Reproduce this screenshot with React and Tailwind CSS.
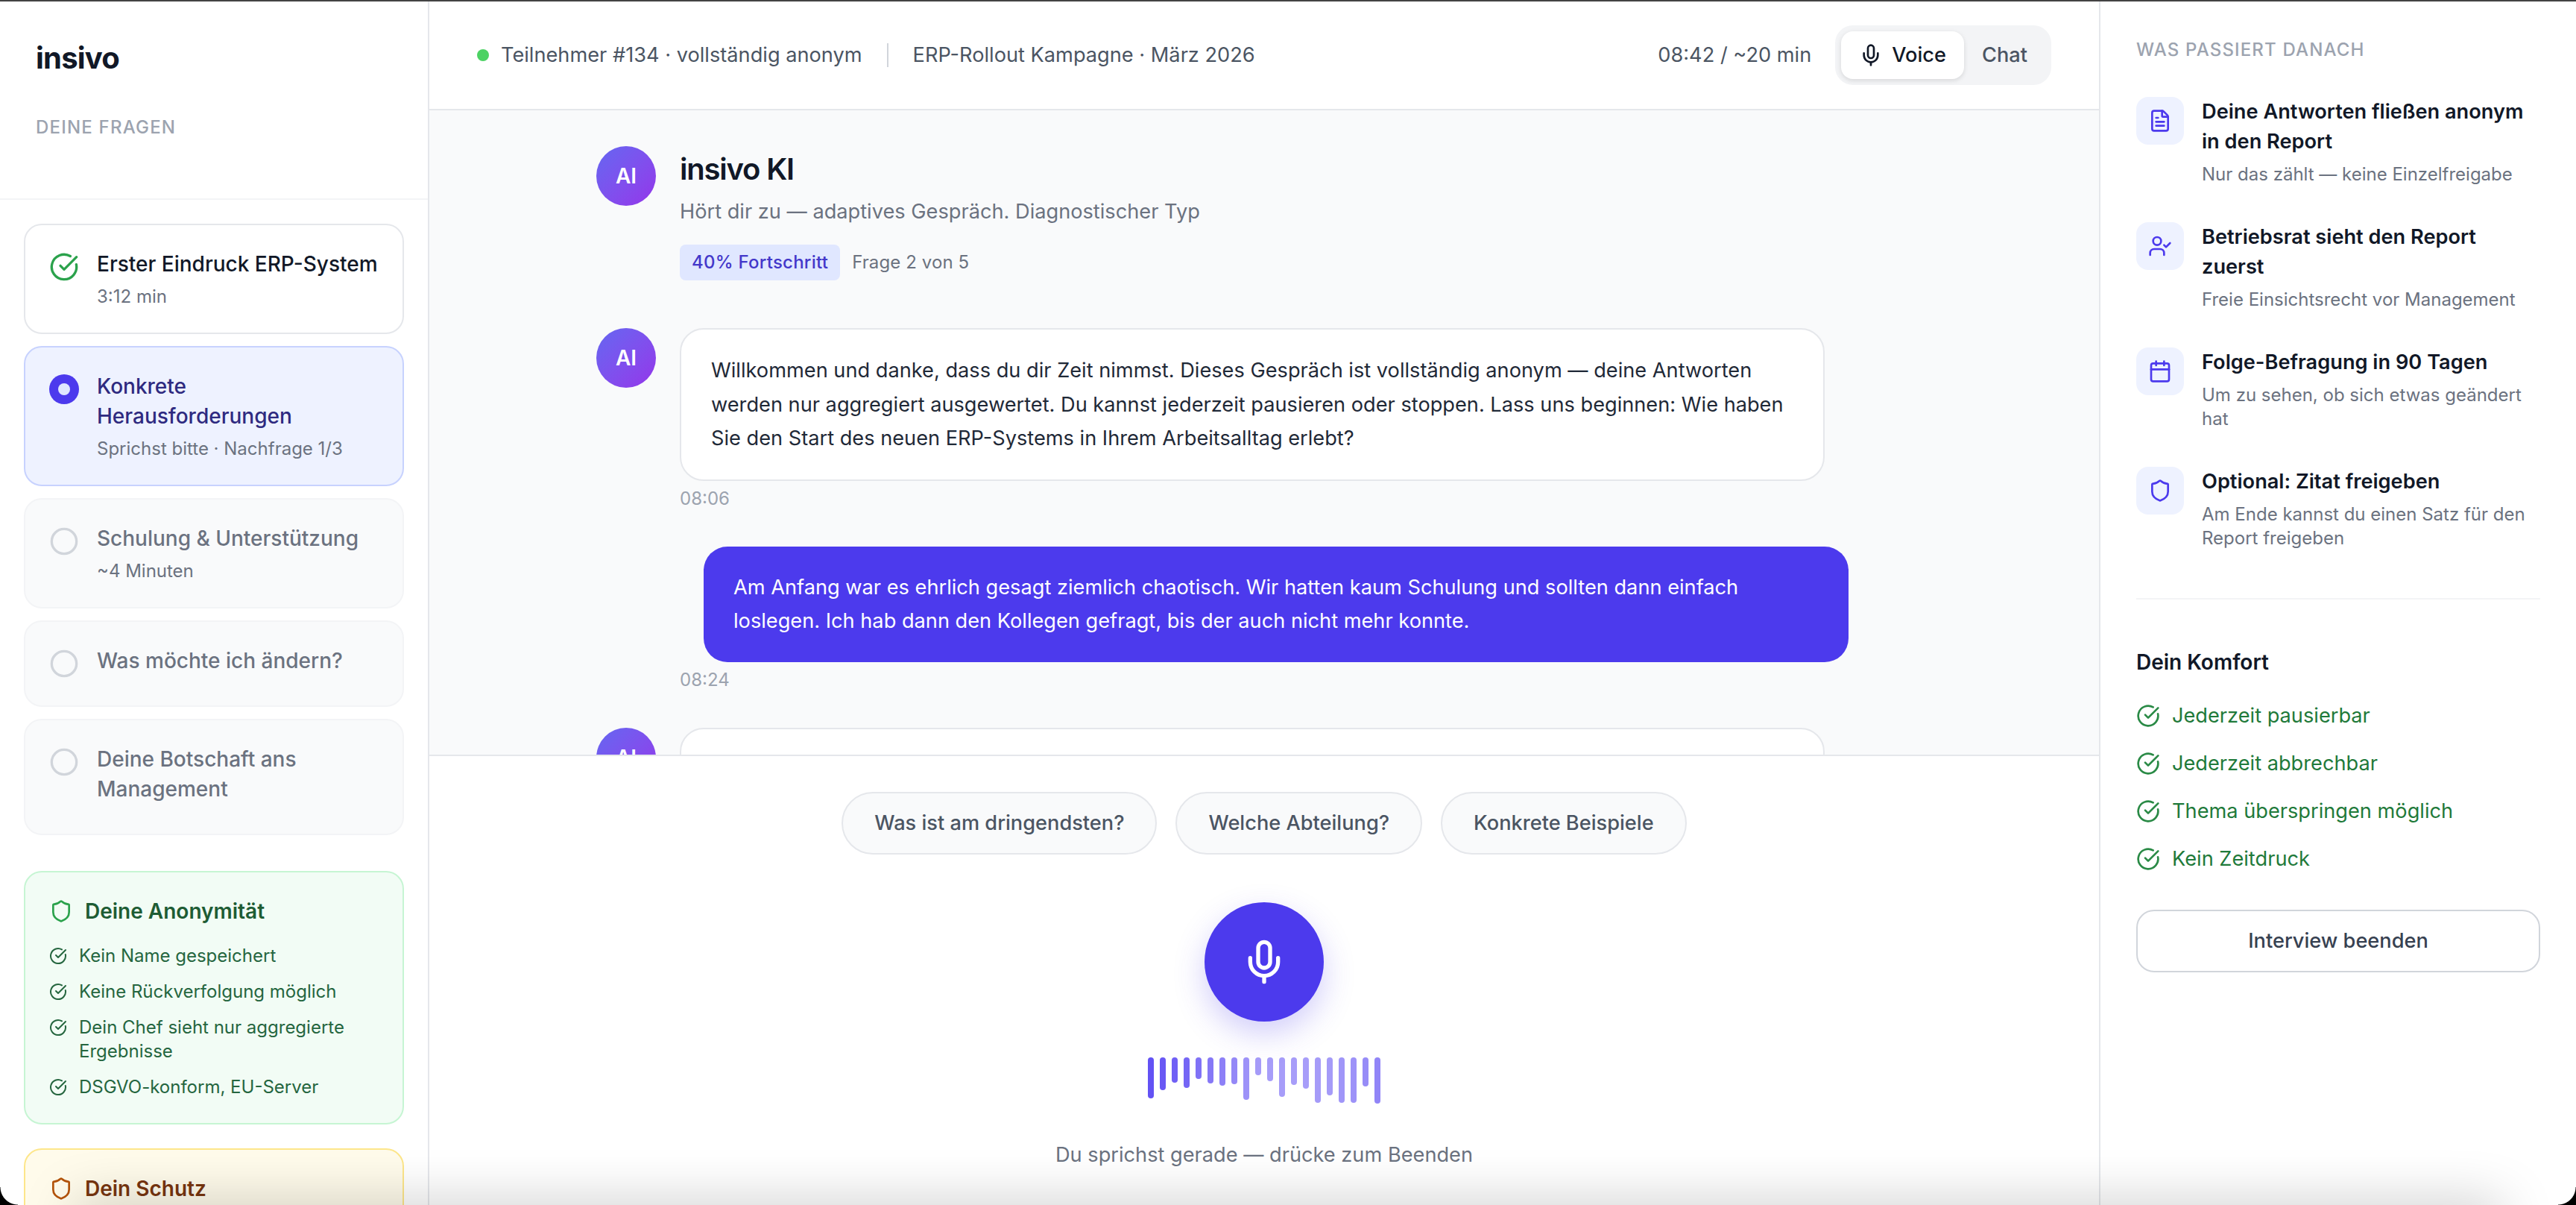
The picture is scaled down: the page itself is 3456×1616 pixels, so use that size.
import {
  Calendar,
  Circle,
  CircleCheckBig,
  FileText,
  Mic,
  Shield,
  UserCheck,
} from 'lucide-react';

const QUESTIONS = [
  { title: 'Erster Eindruck ERP-System', sub: '3:12 min', state: 'done' },
  { title: 'Konkrete Herausforderungen', sub: 'Sprichst bitte · Nachfrage 1/3', state: 'active' },
  { title: 'Schulung & Unterstützung', sub: '~4 Minuten', state: 'open' },
  { title: 'Was möchte ich ändern?', state: 'open' },
  { title: 'Deine Botschaft ans Management', state: 'open' },
];

const ANONYMITY = [
  'Kein Name gespeichert',
  'Keine Rückverfolgung möglich',
  'Dein Chef sieht nur aggregierte Ergebnisse',
  'DSGVO-konform, EU-Server',
];

const NEXT_STEPS = [
  { icon: FileText, title: 'Deine Antworten fließen anonym in den Report', sub: 'Nur das zählt — keine Einzelfreigabe' },
  { icon: UserCheck, title: 'Betriebsrat sieht den Report zuerst', sub: 'Freie Einsichtsrecht vor Management' },
  { icon: Calendar, title: 'Folge-Befragung in 90 Tagen', sub: 'Um zu sehen, ob sich etwas geändert hat' },
  { icon: Shield, title: 'Optional: Zitat freigeben', sub: 'Am Ende kannst du einen Satz für den Report freigeben' },
];

const COMFORT = ['Jederzeit pausierbar', 'Jederzeit abbrechbar', 'Thema überspringen möglich', 'Kein Zeitdruck'];

const CHIPS = ['Was ist am dringendsten?', 'Welche Abteilung?', 'Konkrete Beispiele'];

const WAVE = [
  [55, 0.87], [44, 0.84], [34, 0.8], [41, 0.77], [29, 0.71],
  [35, 0.68], [38, 0.64], [36, 0.6], [57, 0.55], [24, 0.5],
  [32, 0.49], [53, 0.49], [37, 0.49], [42, 0.49], [61, 0.5],
  [51, 0.5], [61, 0.53], [61, 0.55], [39, 0.58], [62, 0.61],
];

function Avatar() {
  return (
    <div className="flex h-[80px] w-[80px] shrink-0 items-center justify-center rounded-full bg-gradient-to-br from-[#6366f1] to-[#9333ea] text-[28px] font-semibold text-white">
      AI
    </div>
  );
}

function QuestionCard({ title, sub, state }) {
  const styles = {
    done: 'border-[#e5e7eb] bg-white text-[#111827]',
    active: 'border-[#c7d2fe] bg-[#eef2ff] text-[#2e2a80]',
    open: 'border-[#f3f4f6] bg-[#f9fafb] text-[#6b7280]',
  };
  return (
    <div className={`flex gap-[24px] rounded-[24px] border-2 p-[32px] ${styles[state]}`}>
      <div className="mt-[4px] h-[40px] w-[40px] shrink-0">
        {state === 'done' && <CircleCheckBig size={40} className="text-[#2ba24c]" />}
        {state === 'active' && (
          <div className="flex h-[40px] w-[40px] items-center justify-center rounded-full bg-[#4c3aed]">
            <div className="h-[16px] w-[16px] rounded-full bg-[#e0e7ff]" />
          </div>
        )}
        {state === 'open' && <Circle size={40} className="text-[#d1d5db]" />}
      </div>
      <div>
        <div className="mb-[8px] text-[28px] leading-[40px] font-medium">{title}</div>
        {sub && <div className="text-[24px] leading-[32px] font-normal text-[#6b7280]">{sub}</div>}
      </div>
    </div>
  );
}

function Sidebar() {
  return (
    <aside className="flex w-[576px] shrink-0 flex-col overflow-hidden border-r-2 border-[#e5e7eb] bg-white">
      <div className="h-[266px] shrink-0 border-b-2 border-[#f3f4f6] px-[48px] pt-[48px]">
        <div className="text-[40px] leading-[56px] font-bold tracking-[-0.8px] text-[#111827]">insivo</div>
        <div className="mt-[49px] text-[24px] leading-[32px] font-medium tracking-[1.2px] text-[#9ca3af]">
          DEINE FRAGEN
        </div>
      </div>
      <div className="flex flex-col gap-[16px] px-[32px] pt-[32px]">
        {QUESTIONS.map((q) => (
          <QuestionCard key={q.title} {...q} />
        ))}
      </div>
      <div className="mt-[48px] flex flex-col gap-[32px] px-[32px]">
        <div className="rounded-[24px] border-2 border-[#c6f5d3] bg-[#f2fcf5] p-[32px]">
          <div className="mb-[24px] flex items-center gap-[16px]">
            <Shield size={32} className="text-[#2ba24c]" />
            <div className="text-[28px] leading-[40px] font-semibold text-[#1e5c34]">Deine Anonymität</div>
          </div>
          <div className="flex flex-col gap-[16px]">
            {ANONYMITY.map((item) => (
              <div key={item} className="flex gap-[16px] text-[24px] leading-[32px] text-[#25663f]">
                <CircleCheckBig size={24} className="mt-[4px] shrink-0" />
                <span>{item}</span>
              </div>
            ))}
          </div>
        </div>
        <div className="rounded-[24px] border-2 border-[#fde68a] bg-[#fffbeb] p-[32px]">
          <div className="flex items-center gap-[16px]">
            <Shield size={32} className="text-[#b45309]" />
            <div className="text-[28px] leading-[40px] font-semibold text-[#78350f]">Dein Schutz</div>
          </div>
        </div>
      </div>
    </aside>
  );
}

function Header() {
  return (
    <header className="flex h-[146px] shrink-0 items-center justify-between border-b-2 border-[#e5e7eb] bg-white px-[64px]">
      <div className="flex items-center text-[27.2px] leading-[40px] text-[#4b5563]">
        <div className="mr-[16px] h-[16px] w-[16px] rounded-full bg-[#4cd263]" />
        <span>Teilnehmer #134 · vollständig anonym</span>
        <div className="mx-[33px] h-[32px] w-[2px] bg-[#d1d5db]" />
        <span>ERP-Rollout Kampagne · März 2026</span>
      </div>
      <div className="flex items-center gap-[32px]">
        <span className="text-[27.2px] leading-[40px] text-[#4b5563]">08:42 / ~20 min</span>
        <div className="flex rounded-[24px] bg-[#f3f4f6] p-[8px]">
          <div className="flex h-[64px] items-center gap-[12px] rounded-[16px] bg-white px-[24px] text-[27.2px] font-medium text-[#111827] shadow-[0_2px_6px_rgba(0,0,0,0.12)]">
            <Mic size={32} />
            Voice
          </div>
          <div className="flex h-[64px] items-center px-[24px] text-[27.2px] font-medium text-[#4b5563]">Chat</div>
        </div>
      </div>
    </header>
  );
}

function Chat() {
  return (
    <div className="min-h-0 flex-1 overflow-hidden bg-[#f9fafb] pt-[48px] pl-[224px]">
      <div className="flex w-[1680px] flex-col">
        <div className="flex gap-[32px]">
          <Avatar />
          <div>
            <div className="pt-[1px] text-[40px] leading-[59px] font-semibold tracking-[-1.2px] text-[#111827]">insivo KI</div>
            <div className="mt-[8px] text-[27.2px] leading-[40px] text-[#6b7280]">
              Hört dir zu — adaptives Gespräch. Diagnostischer Typ
            </div>
            <div className="mt-[24px] flex items-center gap-[16px]">
              <span className="flex h-[48px] items-center rounded-[8px] bg-[#e0e7ff] px-[16px] text-[24px] font-medium tracking-[0.25px] text-[#4338ca]">
                40% Fortschritt
              </span>
              <span className="text-[24px] tracking-[0.1px] text-[#6b7280]">Frage 2 von 5</span>
            </div>
          </div>
        </div>

        <div className="mt-[64px] flex gap-[32px]">
          <Avatar />
          <div>
            <div className="w-[1536px] rounded-[32px] border-2 border-[#e5e7eb] bg-white py-[32px] pr-[16px] pl-[40px] text-[27.2px] leading-[45.5px] text-[#1f2937]">
              Willkommen und danke, dass du dir Zeit nimmst. Dieses Gespräch ist vollständig anonym — deine Antworten
              <br />
              werden nur aggregiert ausgewertet. Du kannst jederzeit pausieren oder stoppen. Lass uns beginnen: Wie haben
              <br />
              Sie den Start des neuen ERP-Systems in Ihrem Arbeitsalltag erlebt?
            </div>
            <div className="mt-[8px] text-[24px] leading-[32px] text-[#9ca3af]">08:06</div>
          </div>
        </div>

        <div className="mt-[48px] flex flex-col">
          <div className="ml-[144px] w-[1536px] rounded-[32px] bg-[#4c3aed] px-[40px] py-[32px] text-[27.2px] leading-[45.5px] text-white">
            Am Anfang war es ehrlich gesagt ziemlich chaotisch. Wir hatten kaum Schulung und sollten dann einfach
            loslegen. Ich hab dann den Kollegen gefragt, bis der auch nicht mehr konnte.
          </div>
          <div className="mt-[8px] ml-[112px] text-[24px] leading-[32px] text-[#9ca3af]">08:24</div>
        </div>

        <div className="mt-[48px] flex gap-[32px]">
          <Avatar />
          <div className="h-[200px] w-[1536px] rounded-[32px] border-2 border-[#e5e7eb] bg-white" />
        </div>
      </div>
    </div>
  );
}

function Composer() {
  return (
    <div className="flex h-[604px] shrink-0 flex-col items-center border-t-2 border-[#e5e7eb] bg-white pt-[48px]">
      <div className="flex gap-[25px]">
        {CHIPS.map((chip) => (
          <div
            key={chip}
            className="flex h-[84px] items-center rounded-full border-2 border-[#e5e7eb] bg-[#f9fafb] px-[42px] text-[27.2px] font-medium text-[#4b5563]"
          >
            {chip}
          </div>
        ))}
      </div>
      <div className="mt-[64px] flex h-[160px] w-[160px] items-center justify-center rounded-full bg-[#4c3aed] text-white shadow-[0_16px_40px_rgba(76,58,237,0.25)]">
        <Mic size={64} />
      </div>
      <div className="mt-[48px] flex h-[64px] items-start gap-[8px]">
        {WAVE.map(([height, opacity], i) => (
          <div
            key={i}
            className="w-[8px] rounded-full bg-[#4c38f2]"
            style={{ height: `${height}px`, opacity }}
          />
        ))}
      </div>
      <div className="mt-[47px] text-[27.2px] leading-[40px] text-[#6b7280]">Du sprichst gerade — drücke zum Beenden</div>
    </div>
  );
}

function RightPanel() {
  return (
    <aside className="w-[640px] shrink-0 border-l-2 border-[#e5e7eb] bg-white px-[48px] pt-[49px]">
      <div className="mb-[47px] text-[24px] leading-[32px] font-medium tracking-[1.15px] text-[#9ca3af]">
        WAS PASSIERT DANACH
      </div>
      <div className="flex flex-col gap-[48px]">
        {NEXT_STEPS.map(({ icon: Icon, title, sub }) => (
          <div key={title} className="flex gap-[24px]">
            <div className="flex h-[64px] w-[64px] shrink-0 items-center justify-center rounded-[16px] bg-[#eef2ff] text-[#4c3aed]">
              <Icon size={32} />
            </div>
            <div>
              <div className="text-[27.2px] leading-[40px] font-semibold text-[#111827]">{title}</div>
              <div className="mt-[8px] text-[24px] leading-[32px] text-[#6b7280]">{sub}</div>
            </div>
          </div>
        ))}
      </div>
      <div className="mt-[64px] border-t-2 border-[#f3f4f6] pt-[64px]">
        <div className="mb-[32px] text-[28px] leading-[40px] font-semibold text-[#111827]">Dein Komfort</div>
        <div className="flex flex-col gap-[24px]">
          {COMFORT.map((item) => (
            <div key={item} className="flex items-center gap-[16px] text-[27.2px] leading-[40px] text-[#1f7a3a]">
              <CircleCheckBig size={32} className="shrink-0 text-[#2a8a46]" />
              {item}
            </div>
          ))}
        </div>
        <div className="mt-[48px] flex h-[84px] items-center justify-center rounded-[24px] border-2 border-[#d1d5db] bg-white text-[27.2px] font-medium text-[#374151]">
          Interview beenden
        </div>
      </div>
    </aside>
  );
}

export default function App() {
  return (
    <div className="relative flex h-[1616px] w-[3456px] flex-col overflow-hidden bg-white font-['Inter',sans-serif]">
      <div className="h-[2px] shrink-0 bg-[#444444]" />
      <div className="flex min-h-0 flex-1">
        <Sidebar />
        <main className="flex min-w-0 flex-1 flex-col">
          <Header />
          <Chat />
          <Composer />
        </main>
        <RightPanel />
      </div>
      {/* window shadow and rounded corners of the captured screen */}
      <div className="pointer-events-none absolute right-[100px] -bottom-[40px] left-[100px] h-[40px] shadow-[0_0_70px_rgba(0,0,0,0.26)]" />
      <div className="pointer-events-none absolute bottom-0 left-0 h-[24px] w-[24px] bg-[radial-gradient(circle_at_100%_0%,transparent_23px,black_24px)]" />
      <div className="pointer-events-none absolute right-0 bottom-0 h-[24px] w-[24px] bg-[radial-gradient(circle_at_0%_0%,transparent_23px,black_24px)]" />
    </div>
  );
}
